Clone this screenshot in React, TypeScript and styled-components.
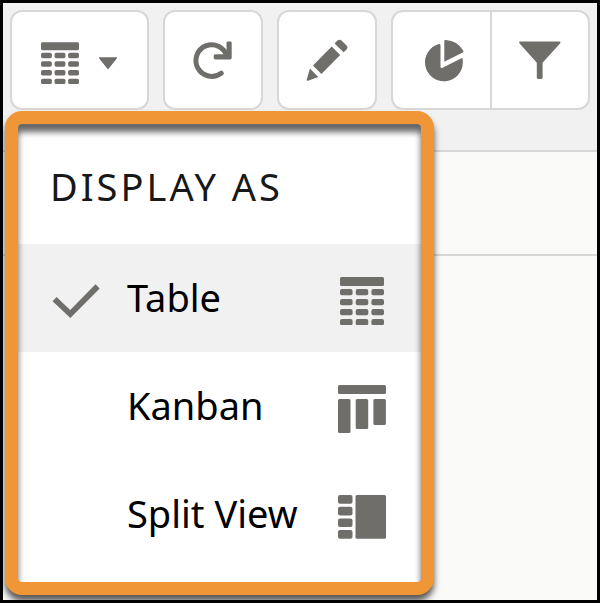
import React, { useState } from "react";
import styled, { createGlobalStyle } from "styled-components";

const GlobalStyle = createGlobalStyle`
  *, *::before, *::after { box-sizing: border-box; }
  body {
    margin: 0;
    background: #fff;
    font-family: "Noto Sans", "Open Sans", sans-serif;
    color: #080707;
  }
`;

const ink = "#706e6b";
const line = "#d9d7d5";

const Frame = styled.main`
  position: relative;
  display: flex;
  flex-direction: column;
  min-height: calc(100vh - 3px);
  border: 3px solid #000;
  background: #fafaf8;
`;

const Toolbar = styled.div`
  display: grid;
  grid-template-columns: 139fr 100fr 100fr 199fr;
  gap: 14px;
  padding: 7px 7px 40px;
  background: #f1f1f1;
  border-bottom: 2px solid ${line};
`;

const Group = styled.div`
  display: flex;
  height: 100px;
  border: 2px solid ${line};
  border-radius: 12px;
  background: #fff;
  overflow: hidden;
`;

const ToolButton = styled.button`
  display: flex;
  flex: 1 1 0;
  align-items: center;
  justify-content: center;
  gap: 19px;
  padding: 0;
  border: 0;
  background: transparent;
  color: ${ink};
  cursor: pointer;

  & + & {
    border-left: 2px solid ${line};
  }
`;

const HeaderStrip = styled.div`
  height: 104px;
  border-bottom: 2px solid ${line};
`;

const Icon = styled.svg`
  display: block;
  flex: none;
  fill: currentColor;
`;

const Menu = styled.div`
  position: absolute;
  top: 108px;
  left: 2px;
  width: 429px;
  padding-bottom: 14px;
  border: 13px solid #f09637;
  border-radius: 17px;
  background: #fff;
  box-shadow: 0 6px 6px rgba(0, 0, 0, 0.65);

  &::after {
    content: "";
    position: absolute;
    inset: 0;
    border-radius: 4px;
    box-shadow: inset 0 8px 6px rgba(0, 0, 0, 0.6);
    pointer-events: none;
  }
`;

const MenuTitle = styled.h2`
  margin: 0;
  padding: 4px 32px 0;
  font-size: 38px;
  font-weight: 400;
  line-height: 116px;
  letter-spacing: 3px;
  white-space: nowrap;
  color: #181818;
`;

const MenuItem = styled.button<{ $selected: boolean }>`
  display: grid;
  grid-template-columns: 48px 1fr 48px;
  column-gap: 27px;
  align-items: center;
  width: 100%;
  height: 108px;
  padding: 0 35px 0 34px;
  border: 0;
  background: ${(p) => (p.$selected ? "#f1f1f1" : "#fff")};
  color: #000;
  font: inherit;
  font-size: 38px;
  line-height: 52px;
  text-align: left;
  cursor: pointer;
`;

const ItemLabel = styled.span`
  padding-bottom: 3px;
  white-space: nowrap;
`;

const IconSlot = styled.span`
  display: block;
  color: ${ink};
`;

const TableShapes = () => (
  <>
    <rect x="0" y="0" width="44" height="9" rx="1.5" />
    {[12, 22, 32, 42].map((y) =>
      [0, 15.7, 31.4].map((x) => (
        <rect key={`${x}-${y}`} x={x} y={y} width="12.6" height="6.3" rx="2" />
      ))
    )}
  </>
);

const MenuTableIcon = () => (
  <Icon width="48" height="54" viewBox="-2 -6 48 54" aria-hidden="true">
    <TableShapes />
  </Icon>
);

const KanbanIcon = () => (
  <Icon width="48" height="54" viewBox="0 -6 48 54" aria-hidden="true">
    <rect x="0" y="0" width="48" height="9" rx="1.5" />
    <rect x="0" y="14" width="12.5" height="34" rx="1.5" />
    <rect x="17.7" y="14" width="12.5" height="30" rx="1.5" />
    <rect x="35.4" y="14" width="12.5" height="26" rx="1.5" />
  </Icon>
);

const SplitIcon = () => (
  <Icon width="48" height="54" viewBox="0 -6 48 54" aria-hidden="true">
    {[2, 13.7, 25.4, 37].map((y) => (
      <rect key={y} x="0" y={y} width="14.5" height="8.7" rx="2" />
    ))}
    <rect x="17.5" y="2" width="30.5" height="43.7" rx="1.5" />
  </Icon>
);

const CheckIcon = () => (
  <Icon width="48" height="54" viewBox="0 -6 48 54" aria-hidden="true">
    <path
      d="M2.6 22.2 L18.3 37 L45.6 9.4"
      fill="none"
      stroke="currentColor"
      strokeWidth="5.8"
      strokeLinejoin="miter"
    />
  </Icon>
);

type View = { id: string; label: string; Glyph: () => React.JSX.Element };

const views: View[] = [
  { id: "table", label: "Table", Glyph: MenuTableIcon },
  { id: "kanban", label: "Kanban", Glyph: KanbanIcon },
  { id: "split", label: "Split View", Glyph: SplitIcon },
];

export default function App() {
  const [selected, setSelected] = useState("table");

  return (
    <>
      <GlobalStyle />
      <Frame>
        <Toolbar role="toolbar" aria-label="List view controls">
          <Group>
            <ToolButton aria-label="Display as" aria-haspopup="menu" aria-expanded="true">
              <Icon width="38" height="47" viewBox="0 -6 44 54" aria-hidden="true">
                <TableShapes />
              </Icon>
              <Icon width="20" height="20" viewBox="0 0 20 20" aria-hidden="true">
                <path d="M1.5 7.2 H18.5 Q19.6 7.3 18.8 8.5 L10.8 18.4 Q10 19.4 9.2 18.4 L1.2 8.5 Q.4 7.3 1.5 7.2Z" />
              </Icon>
            </ToolButton>
          </Group>
          <Group>
            <ToolButton aria-label="Refresh">
              <Icon width="48" height="48" viewBox="0 0 48 48" aria-hidden="true">
                <path
                  d="M38 20.5 A15.8 15.8 0 1 0 32.2 37.2"
                  fill="none"
                  stroke="currentColor"
                  strokeWidth="5"
                  strokeLinecap="round"
                />
                <path d="M34.5 14 L37.5 17.3 V7 Q37.5 5.6 38.9 5.6 H41.3 Q42.7 5.6 42.7 7 V22 Q42.7 23.4 41.3 23.4 H26.3 Q24.7 23.4 24.7 21.8 V19.9 Q24.7 18.3 26.3 18.3 H35Z" />
              </Icon>
            </ToolButton>
          </Group>
          <Group>
            <ToolButton aria-label="Edit">
              <Icon width="48" height="48" viewBox="0 0 48 48" aria-hidden="true">
                <path d="M6.9 32.6 L15.3 40.9 L5 44.7 Q3.4 45 3.8 43.4Z" />
                <path d="M10 29.6 L28.7 10.6 L37.2 19 L18.4 38Z" />
                <path d="M31.6 7.4 L34.2 4.8 Q36.5 2.8 38.8 4.8 L43.6 9.6 Q45.4 11.5 43.4 13.8 L40.6 16.3Z" />
              </Icon>
            </ToolButton>
          </Group>
          <Group>
            <ToolButton aria-label="Show charts">
              <Icon width="48" height="48" viewBox="0 0 48 48" aria-hidden="true">
                <path d="M22 8.1 Q23.5 8 23.5 9.4 V30.8 Q23.7 32.6 25.5 31.8 L44.4 22.3 Q45.7 21.8 45.8 23.4 V26 A18.9 18.9 0 1 1 22 8.1Z" />
                <path d="M27.3 5.2 Q27.3 3.8 28.8 4 A21.5 21.5 0 0 1 46.2 14.6 Q46.8 15.8 45.7 16.4 L27.3 25.8Z" />
              </Icon>
            </ToolButton>
            <ToolButton aria-label="Show filters">
              <Icon width="48" height="48" viewBox="0 0 48 48" aria-hidden="true">
                <path d="M4 5.6 H43.6 Q45.2 5.8 44.2 7.2 L26.6 26.8 V41.6 Q26.6 43 25.2 43 H22.2 Q20.8 43 20.8 41.6 V26.8 L3.4 7.2 Q2.4 5.8 4 5.6Z" />
              </Icon>
            </ToolButton>
          </Group>
        </Toolbar>
        <HeaderStrip />
        <Menu role="menu" aria-labelledby="display-as">
          <MenuTitle id="display-as">DISPLAY AS</MenuTitle>
          {views.map(({ id, label, Glyph }) => (
            <MenuItem
              key={id}
              role="menuitemradio"
              aria-checked={selected === id}
              $selected={selected === id}
              onClick={() => setSelected(id)}
            >
              <IconSlot>{selected === id && <CheckIcon />}</IconSlot>
              <ItemLabel>{label}</ItemLabel>
              <IconSlot>
                <Glyph />
              </IconSlot>
            </MenuItem>
          ))}
        </Menu>
      </Frame>
    </>
  );
}
